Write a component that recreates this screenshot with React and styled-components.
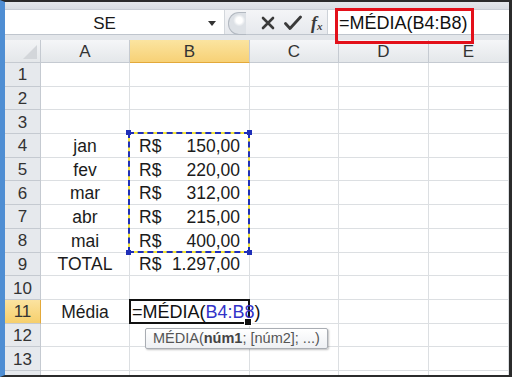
import styled, { createGlobalStyle } from "styled-components";

const GlobalStyle = createGlobalStyle`
  html, body {
    margin: 0;
    padding: 0;
    background: #ffffff;
  }
  body {
    font-family: "Liberation Sans", Arial, sans-serif;
  }
`;

const COLS = ["A", "B", "C", "D", "E"];
const ROW_H = 23.7;

const rows = [
  { n: 1 },
  { n: 2 },
  { n: 3 },
  { n: 4, a: "jan", b: "150,00" },
  { n: 5, a: "fev", b: "220,00" },
  { n: 6, a: "mar", b: "312,00" },
  { n: 7, a: "abr", b: "215,00" },
  { n: 8, a: "mai", b: "400,00" },
  { n: 9, a: "TOTAL", b: "1.297,00" },
  { n: 10 },
  { n: 11, a: "Média", formula: true },
  { n: 12 },
  { n: 13 },
  { n: 14, hidden: true },
];

export default function App() {
  return (
    <>
      <GlobalStyle />
      <Frame>
        <TopStrip />
        <FormulaBar>
          <NameBox>
            <span>SE</span>
            <DropArrow />
          </NameBox>
          <Handle />
          <Tools>
            <svg width="14" height="14" viewBox="0 0 14 14">
              <path
                d="M2 2 L12 12 M12 2 L2 12"
                stroke="#3a3a3a"
                strokeWidth="2.6"
                strokeLinecap="round"
              />
            </svg>
            <svg width="18" height="16" viewBox="0 0 18 16">
              <path
                d="M1.5 8.5 L6 13.5 L16.5 2"
                stroke="#3a3a3a"
                strokeWidth="2.8"
                fill="none"
                strokeLinecap="round"
                strokeLinejoin="round"
              />
            </svg>
            <Fx>
              f<sub>x</sub>
            </Fx>
          </Tools>
          <FormulaField>=MÉDIA(B4:B8)</FormulaField>
          <RedBox />
        </FormulaBar>
        <Gap />
        <Sheet>
          <Corner>
            <svg width="14" height="14" viewBox="0 0 14 14">
              <polygon points="14,0 14,14 0,14" fill="#d3d6da" />
            </svg>
          </Corner>
          {COLS.map((c) => (
            <ColHead key={c} $selected={c === "B"}>
              {c}
            </ColHead>
          ))}
          {rows.map((r) => (
            <Row key={r.n} r={r} />
          ))}
        </Sheet>
      </Frame>
    </>
  );
}

function Row({ r }) {
  return (
    <>
      <RowHead $selected={r.n === 11}>{r.hidden ? "" : r.n}</RowHead>
      <Cell $center>{r.a}</Cell>
      {r.formula ? (
        <ActiveCell>
          =MÉDIA(<Ref>B4:B8</Ref>)
          <FillHandle />
          <Tip>
            MÉDIA(<b>núm1</b>; [núm2]; ...)
          </Tip>
        </ActiveCell>
      ) : (
        <Cell>
          {r.b && (
            <Money>
              <span>R$</span>
              <span>{r.b}</span>
            </Money>
          )}
          {r.n === 4 && (
            <Marquee>
              <Dot $pos="tl" />
              <Dot $pos="tr" />
              <Dot $pos="bl" />
              <Dot $pos="br" />
            </Marquee>
          )}
        </Cell>
      )}
      <Cell />
      <Cell />
      <Cell />
    </>
  );
}

const Frame = styled.div`
  width: 512px;
  height: 377px;
  box-sizing: border-box;
  border-top: 2px solid #2b2b2b;
  border-right: 3px solid #2b2b2b;
  border-bottom: 2px solid #2b2b2b;
  border-left: 5px solid #4f8ed3;
  box-shadow: inset 1px 0 0 #3b72b0;
  overflow: hidden;
  display: flex;
  flex-direction: column;
  background: #ffffff;
`;

const TopStrip = styled.div`
  height: 7px;
  flex: none;
  background: linear-gradient(#e4e7eb, #d9dde2);
  border-bottom: 1px solid #c9ced5;
`;

const FormulaBar = styled.div`
  position: relative;
  height: 24px;
  flex: none;
  display: flex;
  align-items: stretch;
  background: linear-gradient(#f4f5f7, #e6e9ed);
  border-bottom: 1px solid #bfc5cd;
`;

const NameBox = styled.div`
  width: 220px;
  flex: none;
  background: #ffffff;
  position: relative;
  display: flex;
  align-items: center;
  justify-content: center;
  font-size: 17px;
  color: #1a1a1a;
  padding: 3px 20px 0 0;
  box-sizing: border-box;
  border-right: 1px solid #d3d7dc;
`;

const DropArrow = styled.div`
  position: absolute;
  right: 8px;
  top: 11px;
  width: 0;
  height: 0;
  border-left: 4px solid transparent;
  border-right: 4px solid transparent;
  border-top: 5px solid #333;
`;

const Handle = styled.div`
  width: 17px;
  height: 21px;
  margin: 2px 0 0 3px;
  flex: none;
  border-radius: 11px 0 0 11px;
  border: 1px solid #b3b9c1;
  border-right: none;
  background: radial-gradient(circle at 60% 35%, #ffffff 0 3px, #dde1e6 6px);
`;

const Tools = styled.div`
  width: 82px;
  flex: none;
  display: flex;
  align-items: center;
  justify-content: space-around;
  padding: 2px 0 0 10px;
  box-sizing: border-box;
  border-right: 1px solid #cdd2d8;
`;

const Fx = styled.span`
  font-family: "Liberation Serif", "Times New Roman", serif;
  font-style: italic;
  font-weight: bold;
  font-size: 18px;
  color: #3a3a3a;
  line-height: 1;

  sub {
    font-size: 11px;
    vertical-align: -1px;
  }
`;

const FormulaField = styled.div`
  flex: 1;
  background: #ffffff;
  display: flex;
  align-items: center;
  padding: 3px 0 0 11px;
  font-size: 18px;
  color: #111;
  white-space: nowrap;
`;

const RedBox = styled.div`
  position: absolute;
  left: 330px;
  top: -2px;
  width: 139px;
  height: 36px;
  box-sizing: border-box;
  border: 3px solid #e3101a;
  z-index: 5;
`;

const Gap = styled.div`
  height: 5px;
  flex: none;
  background: #e3e6ea;
`;

const Sheet = styled.div`
  display: grid;
  grid-template-columns: 36px 89px 120px 89px 90px 1fr;
  grid-template-rows: 23px;
  grid-auto-rows: ${ROW_H}px;
  font-size: 17.5px;
  color: #1b1b1b;
`;

const headBase = `
  display: flex;
  align-items: center;
  justify-content: center;
  box-sizing: border-box;
  padding-top: 2px;
  font-size: 17px;
  color: #333;
  border-right: 1px solid #c5cad1;
  border-bottom: 1px solid #c5cad1;
`;

const Corner = styled.div`
  ${headBase}
  background: linear-gradient(#f3f4f6, #e4e7ea);
  justify-content: flex-end;
  align-items: flex-end;
  padding: 0 3px 3px 0;
`;

const ColHead = styled.div`
  ${headBase}
  background: ${(p) =>
    p.$selected
      ? "linear-gradient(#fbe4a0, #f7d176)"
      : "linear-gradient(#f5f6f8, #e4e7ea)"};
  border-bottom-color: ${(p) => (p.$selected ? "#e3a93a" : "#c5cad1")};
`;

const RowHead = styled.div`
  ${headBase}
  background: ${(p) =>
    p.$selected ? "linear-gradient(#fbe3a0, #f6cf6c)" : "#e6e9ed"};
  border-right-color: ${(p) => (p.$selected ? "#e3a93a" : "#c5cad1")};
`;

const Cell = styled.div`
  position: relative;
  box-sizing: border-box;
  border-right: 1px solid #dcdfe2;
  border-bottom: 1px solid #dcdfe2;
  display: flex;
  align-items: center;
  justify-content: ${(p) => (p.$center ? "center" : "flex-start")};
  padding-top: 2px;
  white-space: nowrap;
`;

const Money = styled.div`
  flex: 1;
  display: flex;
  justify-content: space-between;
  padding: 0 9px 0 9px;
`;

const Marquee = styled.div`
  position: absolute;
  left: -2px;
  top: -2px;
  width: 122px;
  height: ${ROW_H * 5 + 2}px;
  box-sizing: border-box;
  border: 2px solid #f2e33a;
  z-index: 3;

  &::after {
    content: "";
    position: absolute;
    inset: -2px;
    border: 2px dashed #1f2fb8;
  }
`;

const Dot = styled.div`
  position: absolute;
  z-index: 1;
  width: 5px;
  height: 5px;
  background: #1f2fb8;
  ${(p) => (p.$pos[0] === "t" ? "top: -4px;" : "bottom: -4px;")}
  ${(p) => (p.$pos[1] === "l" ? "left: -4px;" : "right: -4px;")}
`;

const ActiveCell = styled.div`
  position: relative;
  z-index: 4;
  box-sizing: border-box;
  margin: -1px 0 0 -1px;
  border: 2px solid #111;
  display: flex;
  align-items: center;
  padding: 2px 0 0 1px;
  font-size: 18px;
  color: #111;
  white-space: nowrap;
  overflow: visible;
`;

const Ref = styled.span`
  color: #3232c8;
`;

const FillHandle = styled.div`
  position: absolute;
  right: -4px;
  bottom: -4px;
  width: 6px;
  height: 6px;
  background: #111;
  border: 1px solid #fff;
`;

const Tip = styled.div`
  position: absolute;
  left: 14px;
  top: 27px;
  height: 21px;
  padding: 0 7px;
  display: flex;
  align-items: center;
  box-sizing: border-box;
  background: linear-gradient(#ffffff, #eef0f3);
  border: 1px solid #a9adb3;
  border-radius: 2px;
  box-shadow: 1px 1px 2px rgba(0, 0, 0, 0.25);
  font-size: 14.5px;
  color: #555;
  white-space: nowrap;

  b {
    color: #444;
  }
`;
